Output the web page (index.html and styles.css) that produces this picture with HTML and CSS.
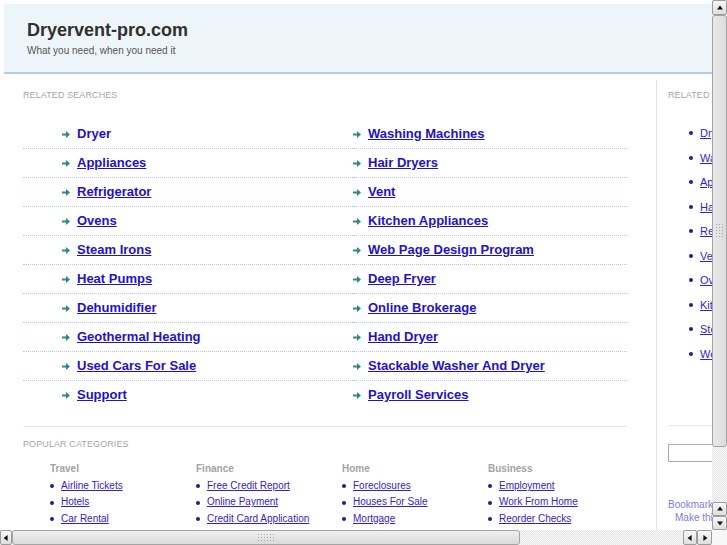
FILE: index.html
```html
<!DOCTYPE html>
<html>
<head>
<meta charset="utf-8">
<title>Dryervent-pro.com</title>
<link rel="stylesheet" href="styles.css">
</head>
<body>
<div class="frame">
  <div class="viewport">
    <div class="page">
      <header class="masthead">
        <h1 class="title">Dryervent-pro.com</h1>
        <p class="tagline">What you need, when you need it</p>
      </header>
      <div class="content">
        <main class="main">
          <h2 class="label">Related Searches</h2>
          <ul class="searches">
            <li><svg class="arrow" viewBox="0 0 8 7"><path d="M0 2.4h4V0l4 3.5L4 7V4.6H0z"/></svg><a class="plain">Dryer</a></li>
            <li><svg class="arrow" viewBox="0 0 8 7"><path d="M0 2.4h4V0l4 3.5L4 7V4.6H0z"/></svg><a>Washing Machines</a></li>
            <li><svg class="arrow" viewBox="0 0 8 7"><path d="M0 2.4h4V0l4 3.5L4 7V4.6H0z"/></svg><a>Appliances</a></li>
            <li><svg class="arrow" viewBox="0 0 8 7"><path d="M0 2.4h4V0l4 3.5L4 7V4.6H0z"/></svg><a>Hair Dryers</a></li>
            <li><svg class="arrow" viewBox="0 0 8 7"><path d="M0 2.4h4V0l4 3.5L4 7V4.6H0z"/></svg><a>Refrigerator</a></li>
            <li><svg class="arrow" viewBox="0 0 8 7"><path d="M0 2.4h4V0l4 3.5L4 7V4.6H0z"/></svg><a>Vent</a></li>
            <li><svg class="arrow" viewBox="0 0 8 7"><path d="M0 2.4h4V0l4 3.5L4 7V4.6H0z"/></svg><a>Ovens</a></li>
            <li><svg class="arrow" viewBox="0 0 8 7"><path d="M0 2.4h4V0l4 3.5L4 7V4.6H0z"/></svg><a>Kitchen Appliances</a></li>
            <li><svg class="arrow" viewBox="0 0 8 7"><path d="M0 2.4h4V0l4 3.5L4 7V4.6H0z"/></svg><a>Steam Irons</a></li>
            <li><svg class="arrow" viewBox="0 0 8 7"><path d="M0 2.4h4V0l4 3.5L4 7V4.6H0z"/></svg><a>Web Page Design Program</a></li>
            <li><svg class="arrow" viewBox="0 0 8 7"><path d="M0 2.4h4V0l4 3.5L4 7V4.6H0z"/></svg><a>Heat Pumps</a></li>
            <li><svg class="arrow" viewBox="0 0 8 7"><path d="M0 2.4h4V0l4 3.5L4 7V4.6H0z"/></svg><a>Deep Fryer</a></li>
            <li><svg class="arrow" viewBox="0 0 8 7"><path d="M0 2.4h4V0l4 3.5L4 7V4.6H0z"/></svg><a>Dehumidifier</a></li>
            <li><svg class="arrow" viewBox="0 0 8 7"><path d="M0 2.4h4V0l4 3.5L4 7V4.6H0z"/></svg><a>Online Brokerage</a></li>
            <li><svg class="arrow" viewBox="0 0 8 7"><path d="M0 2.4h4V0l4 3.5L4 7V4.6H0z"/></svg><a>Geothermal Heating</a></li>
            <li><svg class="arrow" viewBox="0 0 8 7"><path d="M0 2.4h4V0l4 3.5L4 7V4.6H0z"/></svg><a>Hand Dryer</a></li>
            <li><svg class="arrow" viewBox="0 0 8 7"><path d="M0 2.4h4V0l4 3.5L4 7V4.6H0z"/></svg><a>Used Cars For Sale</a></li>
            <li><svg class="arrow" viewBox="0 0 8 7"><path d="M0 2.4h4V0l4 3.5L4 7V4.6H0z"/></svg><a>Stackable Washer And Dryer</a></li>
            <li><svg class="arrow" viewBox="0 0 8 7"><path d="M0 2.4h4V0l4 3.5L4 7V4.6H0z"/></svg><a>Support</a></li>
            <li><svg class="arrow" viewBox="0 0 8 7"><path d="M0 2.4h4V0l4 3.5L4 7V4.6H0z"/></svg><a>Payroll Services</a></li>
          </ul>
          <h2 class="label cats-label">Popular Categories</h2>
          <div class="cats">
            <div class="cat">
              <h3>Travel</h3>
              <ul>
                <li><a>Airline Tickets</a></li>
                <li><a>Hotels</a></li>
                <li><a>Car Rental</a></li>
              </ul>
            </div>
            <div class="cat">
              <h3>Finance</h3>
              <ul>
                <li><a>Free Credit Report</a></li>
                <li><a>Online Payment</a></li>
                <li><a>Credit Card Application</a></li>
              </ul>
            </div>
            <div class="cat">
              <h3>Home</h3>
              <ul>
                <li><a>Foreclosures</a></li>
                <li><a>Houses For Sale</a></li>
                <li><a>Mortgage</a></li>
              </ul>
            </div>
            <div class="cat">
              <h3>Business</h3>
              <ul>
                <li><a>Employment</a></li>
                <li><a>Work From Home</a></li>
                <li><a>Reorder Checks</a></li>
              </ul>
            </div>
          </div>
        </main>
        <aside class="side">
          <h2 class="label">Related Searches</h2>
          <ul class="side-list">
            <li><a>Dryer</a></li>
            <li><a>Washing Machines</a></li>
            <li><a>Appliances</a></li>
            <li><a>Hair Dryers</a></li>
            <li><a>Refrigerator</a></li>
            <li><a>Vent</a></li>
            <li><a>Ovens</a></li>
            <li><a>Kitchen Appliances</a></li>
            <li><a>Steam Irons</a></li>
            <li><a>Web Page Design Program</a></li>
          </ul>
          <input class="search" type="text">
          <p class="bm">Bookmark this page</p>
          <p class="bm indent">Make this your homepage</p>
        </aside>
      </div>
    </div>
  </div>
  <div class="vbar">
    <span class="btn up"></span>
    <span class="thumb vthumb"><span class="grip vgrip"></span></span>
    <span class="track"></span>
    <span class="btn up small"></span>
    <span class="btn down small"></span>
  </div>
  <div class="hbar">
    <span class="btn left first"></span>
    <span class="thumb hthumb"><span class="grip hgrip"></span></span>
    <span class="track"></span>
    <span class="btn left"></span>
    <span class="btn right"></span>
  </div>
  <div class="corner"></div>
</div>
</body>
</html>
```

FILE: styles.css
```css
* { box-sizing: border-box; }
html, body { margin: 0; padding: 0; background: #fff; }
body { font-family: "Liberation Sans", Arial, sans-serif; }

.frame {
  display: grid;
  grid-template-columns: 712px 15px;
  grid-template-rows: 530px 15px;
  width: 727px;
  height: 545px;
  overflow: hidden;
}

.viewport { overflow: hidden; background: #fff; }

.page {
  width: 880px;
  min-height: 560px;
  padding: 4px 0 0 4px;
  display: flex;
  flex-direction: column;
}

.masthead {
  height: 70px;
  background: #eef5f8;
  border-bottom: 2px solid #b6cbea;
  padding: 15px 0 0 23px;
}
.title {
  margin: 0;
  font-size: 18px;
  line-height: 22px;
  font-weight: bold;
  color: #303030;
}
.tagline {
  margin: 4px 0 0;
  font-size: 10px;
  line-height: 12px;
  color: #555;
}

.content {
  flex: 1;
  display: flex;
  margin-top: 6px;
}

.main {
  width: 653px;
  flex: none;
  border-right: 1px solid #dbe5f4;
  padding: 10px 0 0 19px;
}

.label {
  margin: 0;
  font-size: 9px;
  line-height: 11px;
  font-weight: normal;
  text-transform: uppercase;
  color: #a6a6a6;
  letter-spacing: 0.1px;
}

a { cursor: pointer; }

.searches {
  list-style: none;
  margin: 19px 0 0;
  padding: 0 0 17px;
  width: 604px;
  display: grid;
  grid-template-columns: 330px 274px;
  border-bottom: 1px solid #e2eaf4;
}
.searches li {
  height: 29px;
  display: flex;
  align-items: center;
  border-bottom: 1px dotted #b3c8e8;
}
.searches li:nth-child(odd) { padding-left: 39px; }
.searches li:nth-last-child(-n+2) { border-bottom: none; height: 28px; }
.searches a {
  font-size: 13px;
  font-weight: bold;
  color: #2211cc;
  text-decoration: underline;
  line-height: 16px;
}
.searches a.plain { text-decoration: none; }
.arrow {
  width: 8px;
  height: 7px;
  margin-right: 7px;
  fill: #2e8a7e;
  flex: none;
}

.cats-label { margin-top: 12px; }

.cats {
  display: grid;
  grid-template-columns: repeat(4, 146px);
  padding-left: 27px;
  margin-top: 13px;
}
.cat h3 {
  margin: 0;
  font-size: 10px;
  line-height: 12px;
  font-weight: bold;
  color: #a2a2a2;
}
.cat ul {
  list-style: none;
  margin: 3px 0 0;
  padding: 0;
}
.cat li {
  font-size: 10px;
  line-height: 16.4px;
  display: flex;
  align-items: center;
}
.cat li::before {
  content: "";
  width: 4px;
  height: 4px;
  border-radius: 50%;
  background: #1e1e8c;
  margin-right: 7px;
  flex: none;
}
.cat a { color: #3322cc; text-decoration: underline; }

.side {
  flex: 1;
  padding: 10px 0 0 11px;
}
.side-list {
  list-style: none;
  margin: 20px 0 0;
  padding: 0 0 59px 21px;
  border-bottom: 1px solid #e2eaf4;
}
.side-list li {
  font-size: 11px;
  line-height: 24.5px;
  display: flex;
  align-items: center;
  white-space: nowrap;
}
.side-list li::before {
  content: "";
  width: 4px;
  height: 4px;
  border-radius: 50%;
  background: #1e1e8c;
  margin-right: 7px;
  flex: none;
}
.side-list a { color: #3322cc; text-decoration: underline; }

.search {
  display: block;
  margin-top: 18px;
  width: 150px;
  height: 18px;
  border: 1px solid #ababab;
  background: #fff;
  padding: 0;
}
.bm {
  margin: 0;
  font-size: 10px;
  line-height: 13px;
  color: #7d7de0;
  white-space: nowrap;
}
.bm:first-of-type { margin-top: 36px; }
.bm.indent { padding-left: 7px; }

/* scrollbars */
.vbar, .hbar {
  display: flex;
  background: #f0f0f0;
}
.vbar { flex-direction: column; }
.corner { background: #f7f7f7; }

.btn {
  flex: none;
  position: relative;
  background: linear-gradient(#f8f8f8, #dedede);
  border: 1px solid #9c9c9c;
  border-radius: 2px;
}
.vbar .btn { height: 15px; }
.vbar .btn.small { height: 14px; }
.hbar .btn { width: 14px; }
.hbar .btn.first { width: 12px; }
.hbar .btn.right { width: 15px; }

.btn::after {
  content: "";
  position: absolute;
  left: 50%;
  top: 50%;
  width: 0;
  height: 0;
  border: 3.5px solid transparent;
}
.btn.up::after { border-bottom: 4px solid #111; border-top-width: 0; transform: translate(-50%, -60%); }
.btn.down::after { border-top: 4px solid #111; border-bottom-width: 0; transform: translate(-50%, -40%); }
.btn.left::after { border-right: 4px solid #111; border-left-width: 0; transform: translate(-60%, -50%); }
.btn.right::after { border-left: 4px solid #111; border-right-width: 0; transform: translate(-40%, -50%); }

.thumb {
  flex: none;
  display: flex;
  align-items: center;
  justify-content: center;
  border: 1px solid #a4a4a4;
  border-radius: 3px;
}
.vthumb {
  height: 432px;
  background: linear-gradient(90deg, #e9e9e9, #dcdcdc);
}
.hthumb {
  width: 508px;
  background: linear-gradient(#f0f0f0, #dadada);
}
.grip {
  background-image: radial-gradient(circle, #a8a8a8 0.7px, transparent 0.9px);
  background-size: 3px 3px;
}
.vgrip { width: 10px; height: 16px; }
.hgrip { width: 18px; height: 9px; }

.track {
  flex: 1;
  background-color: #f4f4f4;
  background-image: repeating-conic-gradient(#e6e6e6 0 25%, #f7f7f7 0 50%);
  background-size: 2px 2px;
}
```
